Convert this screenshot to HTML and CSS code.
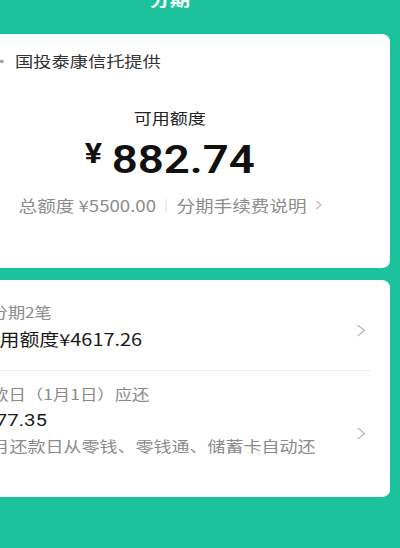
FILE: index.html
```html
<!DOCTYPE html>
<html lang="zh-CN">
<head>
<meta charset="utf-8">
<title>分期</title>
<link rel="stylesheet" href="styles.css">
</head>
<body>
<div class="page">
  <div class="topbar"><div class="title">分期</div></div>

  <div class="card card-quota">
    <div class="provider">
      <svg class="logo" viewBox="0 0 16 16" width="16" height="16"><circle cx="8" cy="8" r="6.5" fill="none" stroke="#9a9a9a" stroke-width="1.4"/><path d="M5 8h6M8 5v6" stroke="#9a9a9a" stroke-width="1.4"/></svg>
      <span class="dot">·</span>
      <span class="provider-name">国投泰康信托提供</span>
    </div>
    <div class="label">可用额度</div>
    <div class="amount"><span class="cur">¥</span><span class="num">882.74</span></div>
    <div class="meta">
      <span>总额度 ¥5500.00</span>
      <span class="sep"></span>
      <span>分期手续费说明</span>
      <svg class="chev-sm" viewBox="0 0 5 10" width="5" height="10"><path d="M0.6 0.8 L4.3 5 L0.6 9.2" fill="none" stroke="#b8b8b8" stroke-width="1.1"/></svg>
    </div>
  </div>

  <div class="card card-list">
    <div class="row row-first">
      <div class="row-text">
        <div class="sub">已分期2笔</div>
        <div class="main shift">可用额度¥4617.26</div>
      </div>
      <svg class="chev chev-low" viewBox="0 0 8 13" width="8" height="13"><path d="M1 1 L6.8 6.5 L1 12" fill="none" stroke="#bdbdbd" stroke-width="1.2"/></svg>
    </div>
    <div class="divider"></div>
    <div class="row row-second">
      <div class="row-text clip">
        <div class="sub">还款日（1月1日）应还</div>
        <div class="main num-main">¥177.35</div>
        <div class="note">每月还款日从零钱、零钱通、储蓄卡自动还款</div>
      </div>
      <svg class="chev" viewBox="0 0 8 13" width="8" height="13"><path d="M1 1 L6.8 6.5 L1 12" fill="none" stroke="#bdbdbd" stroke-width="1.2"/></svg>
    </div>
  </div>
</div>
</body>
</html>
```

FILE: styles.css
```css
html, body {
  margin: 0;
  padding: 0;
}
body {
  background: #1bc29b;
  overflow: hidden;
  height: 548px;
  font-family: "Noto Sans CJK SC", "Noto Sans", sans-serif;
}
.page {
  width: 383px;
  margin-left: -60px;
  transform: scaleX(1.2);
  transform-origin: 0 0;
}
.topbar {
  height: 34px;
  display: flex;
  justify-content: center;
}
.title {
  margin-top: -13px;
  height: 24px;
  line-height: 24px;
  font-size: 17px;
  font-weight: 700;
  color: #ffffff;
}
.card {
  background: #ffffff;
  margin: 0 8px;
  border-radius: 7px;
}
.card-quota {
  height: 234px;
  box-sizing: border-box;
  padding: 16px 20px 0 20px;
  display: flex;
  flex-direction: column;
  align-items: center;
}
.provider {
  align-self: stretch;
  display: flex;
  align-items: center;
  height: 20px;
  font-size: 15px;
  color: #333333;
}
.logo {
  flex: none;
}
.dot {
  color: #a0a0a0;
  margin-left: 0;
  margin-right: 3.5px;
  font-size: 15px;
}
.provider-name {
  line-height: 20px;
  font-size: 15.2px;
}
.label {
  margin-top: 37px;
  line-height: 22px;
  font-size: 15px;
  color: #222222;
}
.amount {
  margin-top: 12px;
  display: flex;
  align-items: flex-start;
  height: 38px;
}
.cur {
  font-family: Roboto, "Noto Sans", sans-serif;
  font-weight: 700;
  font-size: 27px;
  line-height: 27px;
  margin-top: 0;
  margin-right: 8px;
  color: #111111;
}
.num {
  font-family: Roboto, "Noto Sans", sans-serif;
  font-weight: 600;
  font-size: 38px;
  line-height: 38px;
  color: #111111;
}
.meta {
  margin-top: 16px;
  display: flex;
  align-items: center;
  height: 20px;
  font-size: 15.5px;
  color: #8c8c8c;
}
.sep {
  width: 1px;
  height: 13px;
  background: #e6e6e6;
  margin: 0 8px;
}
.chev-sm {
  margin-left: 7px;
}
.card-list {
  margin-top: 12px;
  height: 217px;
  display: flex;
  flex-direction: column;
}
.row {
  display: flex;
  align-items: center;
  padding: 0 20px;
}
.row-first {
  height: 90px;
  box-sizing: border-box;
  padding-top: 22px;
  padding-bottom: 19px;
}
.row-second {
  flex: 1;
  padding-top: 13px;
  padding-bottom: 41px;
  align-items: flex-start;
}
.row-text {
  flex: 1;
  min-width: 0;
}
.row-text.clip {
  margin-right: 34px;
  overflow: hidden;
}
.sub {
  font-size: 14.3px;
  line-height: 20px;
  color: #8a8a8a;
}
.row-second .sub {
  font-size: 14.5px;
}
.main {
  margin-top: 5px;
  font-size: 16.6px;
  line-height: 24px;
  color: #1a1a1a;
}
.shift {
  margin-left: 5px;
}
.num-main {
  font-size: 17px;
  line-height: 22px;
  font-family: Roboto, "Noto Sans CJK SC", sans-serif;
  font-weight: 400;
}
.note {
  margin-top: 5px;
  font-size: 15px;
  line-height: 20px;
  color: #8a8a8a;
  white-space: nowrap;
  overflow: hidden;
}
.chev {
  flex: none;
}
.chev-low {
  margin-top: 8px;
}
.row-second .chev {
  align-self: center;
  margin-top: 26px;
}
.divider {
  height: 1px;
  background: #efefef;
  margin: 0 16px 0 20px;
}
```
